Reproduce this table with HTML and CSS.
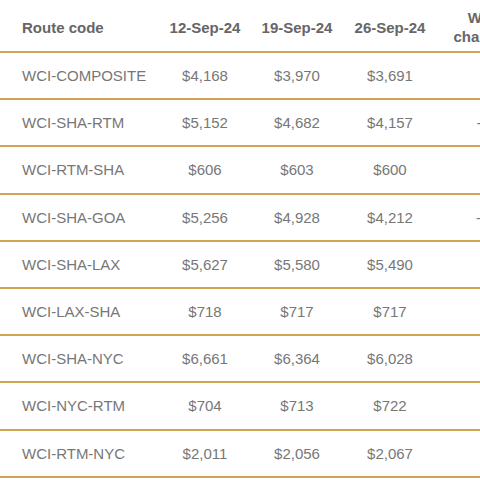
FILE: index.html
```html
<!DOCTYPE html>
<html>
<head>
<meta charset="utf-8">
<link rel="stylesheet" href="styles.css">
</head>
<body>
<div class="table">
  <div class="row head">
    <div class="cell first">Route code</div>
    <div class="cell">12-Sep-24</div>
    <div class="cell">19-Sep-24</div>
    <div class="cell">26-Sep-24</div>
    <div class="cell">Weekly<br>change (%)</div>
  </div>
  <div class="row"><div class="cell first">WCI-COMPOSITE</div><div class="cell">$4,168</div><div class="cell">$3,970</div><div class="cell">$3,691</div><div class="cell">-7%</div></div>
  <div class="row"><div class="cell first">WCI-SHA-RTM</div><div class="cell">$5,152</div><div class="cell">$4,682</div><div class="cell">$4,157</div><div class="cell">-11%</div></div>
  <div class="row"><div class="cell first">WCI-RTM-SHA</div><div class="cell">$606</div><div class="cell">$603</div><div class="cell">$600</div><div class="cell">0%</div></div>
  <div class="row"><div class="cell first">WCI-SHA-GOA</div><div class="cell">$5,256</div><div class="cell">$4,928</div><div class="cell">$4,212</div><div class="cell">-15%</div></div>
  <div class="row"><div class="cell first">WCI-SHA-LAX</div><div class="cell">$5,627</div><div class="cell">$5,580</div><div class="cell">$5,490</div><div class="cell">-2%</div></div>
  <div class="row"><div class="cell first">WCI-LAX-SHA</div><div class="cell">$718</div><div class="cell">$717</div><div class="cell">$717</div><div class="cell">0%</div></div>
  <div class="row"><div class="cell first">WCI-SHA-NYC</div><div class="cell">$6,661</div><div class="cell">$6,364</div><div class="cell">$6,028</div><div class="cell">-5%</div></div>
  <div class="row"><div class="cell first">WCI-NYC-RTM</div><div class="cell">$704</div><div class="cell">$713</div><div class="cell">$722</div><div class="cell">1%</div></div>
  <div class="row"><div class="cell first">WCI-RTM-NYC</div><div class="cell">$2,011</div><div class="cell">$2,056</div><div class="cell">$2,067</div><div class="cell">1%</div></div>
</div>
</body>
</html>
```

FILE: styles.css
```css
html, body {
  margin: 0;
  padding: 0;
  background: #ffffff;
  overflow: hidden;
}
.table {
  width: 549px;
  font-family: "Liberation Sans", Arial, sans-serif;
  font-size: 15px;
  color: #777777;
}
.row {
  display: grid;
  grid-template-columns: 158px 94px 90px 96px 111px;
  align-items: center;
  height: 47.2px;
  box-sizing: border-box;
  border-bottom: 2px solid #cfa552;
}
.row.head {
  height: 53px;
  padding-top: 3px;
  font-weight: bold;
  color: #666666;
  line-height: 19px;
}
.cell {
  text-align: center;
  white-space: nowrap;
}
.cell.first {
  text-align: left;
  padding-left: 22px;
}
```
